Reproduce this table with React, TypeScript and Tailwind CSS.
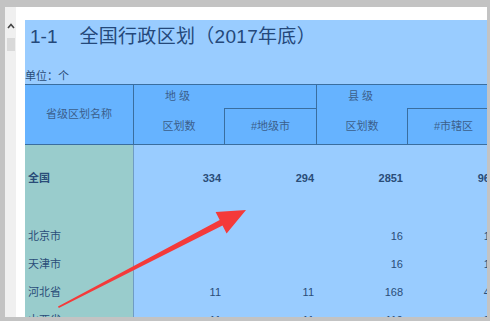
import React from 'react';

// Spreadsheet preview with a red annotation arrow on top.

type Row = { name: string; cells: string[]; bold?: boolean };

const rows: Row[] = [
  { name: '北京市', cells: ['', '', '16', '16'] },
  { name: '天津市', cells: ['', '', '16', '16'] },
  { name: '河北省', cells: ['11', '11', '168', '47'] },
  { name: '山西省', cells: ['11', '11', '119', '23'] },
];

const widths = ['w-[90px]', 'w-[93px]', 'w-[89px]', 'w-[93px]'];

const DataRow = ({ row }: { row: Row }) => (
  <div className={`flex h-[28px] items-center ${row.bold ? 'font-bold' : ''}`}>
    <div className="flex h-full w-[109px] shrink-0 items-center border-r border-[#6f9cc4] bg-[#99cccc] pl-[3px] text-[11px]">
      {row.name}
    </div>
    {row.cells.map((value, i) => (
      <div key={i} className={`${widths[i]} shrink-0 pr-[3px] text-right text-[11px]`}>
        {value}
      </div>
    ))}
  </div>
);

const HeaderGroup = ({ top, left, right }: { top: string; left: string; right: string }) => (
  <div className="flex w-[183px] shrink-0 flex-col border-r border-[#3a6e9f]">
    <div className="flex h-[23px]">
      <div className="flex w-[90px] items-center justify-center tracking-[3px]">{top}</div>
    </div>
    <div className="flex flex-1">
      <div className="flex w-[90px] items-center justify-center">{left}</div>
      <div className="flex flex-1 items-center justify-center border-l border-t border-[#3a6e9f]">{right}</div>
    </div>
  </div>
);

export default function App() {
  return (
    <div className="relative flex h-[321px] w-[490px] overflow-hidden bg-[#c3c3c3] pb-[4px] pl-[5px] pr-[3px] pt-[7px] font-['Liberation_Sans','Noto_Sans_CJK_SC',sans-serif] text-[#2a4d78]">
      <div className="flex w-[11px] shrink-0 flex-col items-center bg-[#f0f0f0]">
        <svg width="8" height="6" viewBox="0 0 8 6" className="mt-[16px]">
          <path d="M1 5 L4 1.5 L7 5" fill="none" stroke="#444" strokeWidth="1.6" />
        </svg>
        <div className="ml-[1px] mt-[9px] h-[13px] w-[8px] bg-[#d9d9d9]" />
      </div>

      <div className="flex-1 overflow-hidden bg-white pl-[9px] pt-[13px]">
        <div className="h-full w-[480px] bg-[#99ccff]">
          <div className="flex h-[64px] flex-col">
            <div className="mt-[5px] flex h-[24px] items-center pl-[5px] text-[19px] text-[#24487a]">
              <span>1-1</span>
              <span className="ml-[22px] tracking-[0.3px]">全国行政区划（2017年底）</span>
            </div>
            <div className="mt-[20px] text-[11px] leading-[14px]">单位：个</div>
          </div>

          <div className="flex h-[61px] border-y border-[#3a6e9f] bg-[#66b3ff] text-[11px] text-[#3b5f8c]">
            <div className="flex w-[109px] shrink-0 items-center justify-center border-r border-[#3a6e9f]">
              省级区划名称
            </div>
            <HeaderGroup top="地级" left="区划数" right="#地级市" />
            <HeaderGroup top="县级" left="区划数" right="#市辖区" />
          </div>

          <div className="flex h-[19px]">
            <div className="w-[109px] border-r border-[#6f9cc4] bg-[#99cccc]" />
          </div>
          <DataRow row={{ name: '全国', cells: ['334', '294', '2851', '962'], bold: true }} />
          <div className="flex h-[30px]">
            <div className="w-[109px] border-r border-[#6f9cc4] bg-[#99cccc]" />
          </div>
          {rows.map(row => (
            <DataRow key={row.name} row={row} />
          ))}
        </div>
      </div>

      <svg className="pointer-events-none absolute left-0 top-0" width="490" height="321" viewBox="0 0 490 321">
        <polygon
          points="58,306.5 219.7,220.1 215.6,212.1 246,210 226.6,233.5 222.5,225.5 58.8,308"
          fill="#f43a3a"
        />
      </svg>
    </div>
  );
}
